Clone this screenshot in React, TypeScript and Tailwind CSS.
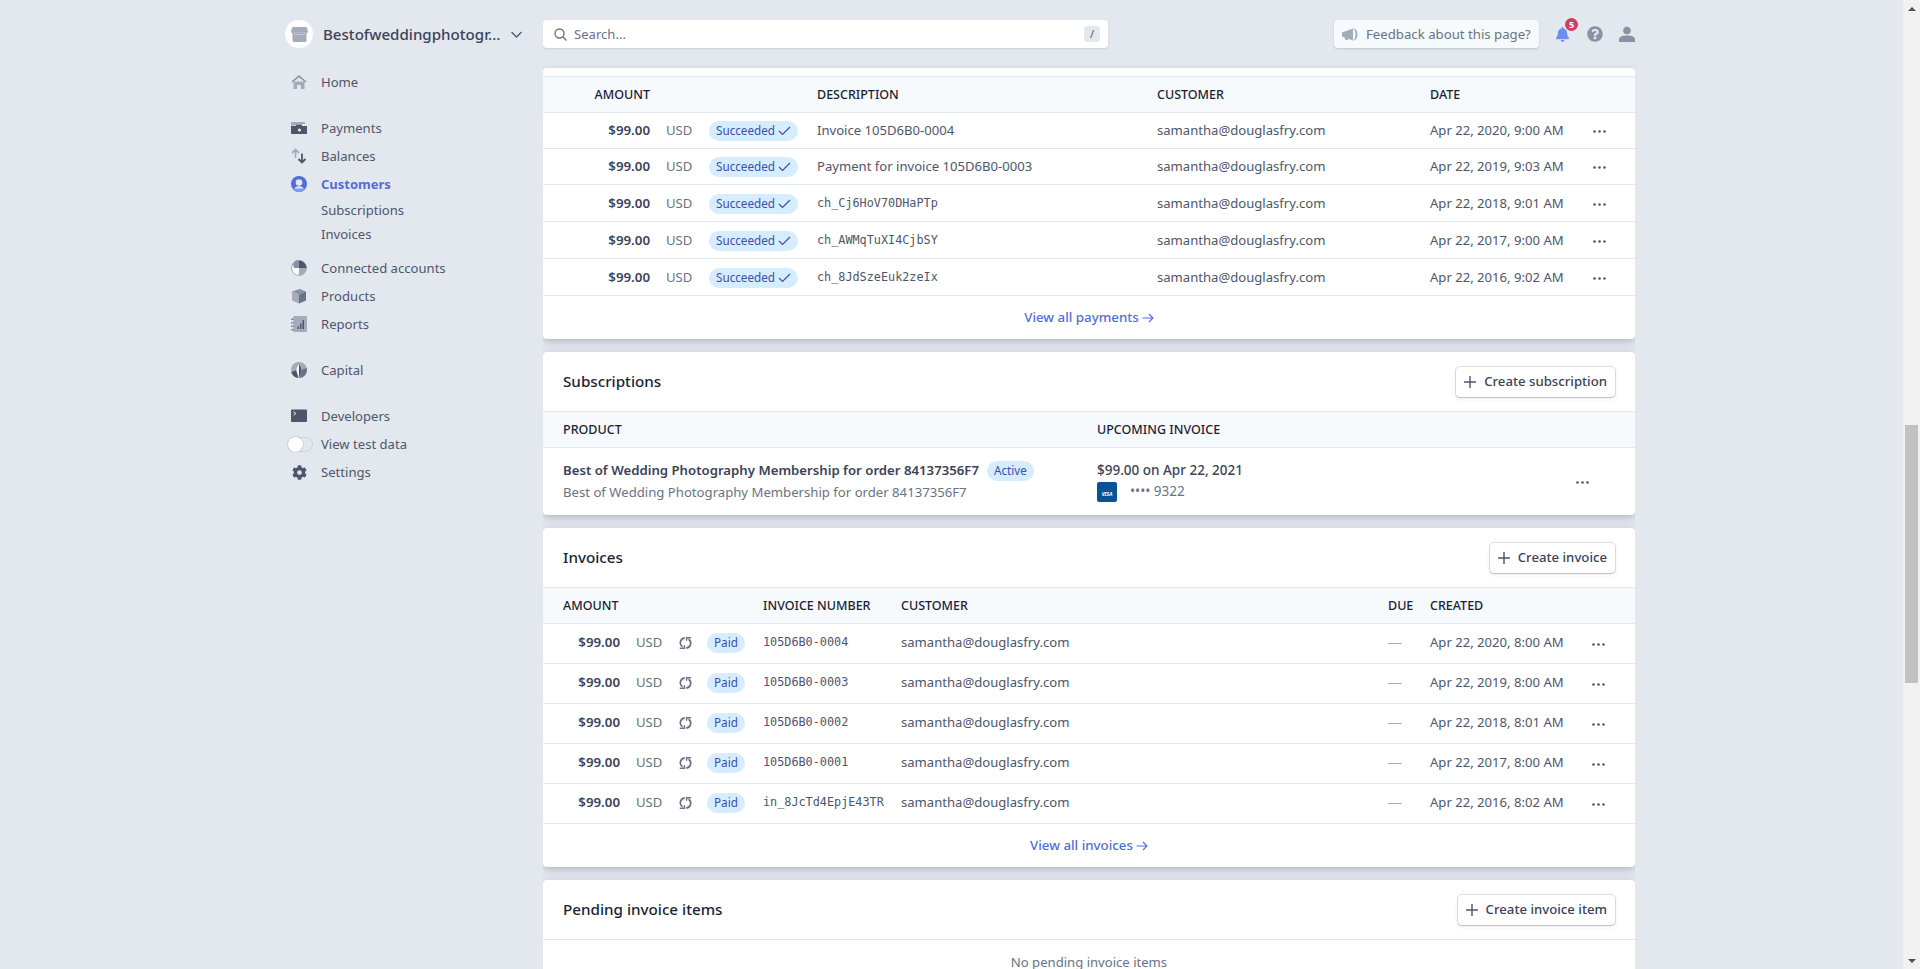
import React from "react";
import { FaBell, FaCog, FaQuestionCircle } from "react-icons/fa";

const payments = [
  ["Invoice 105D6B0-0004", false, "Apr 22, 2020, 9:00 AM", "h-9"],
  ["Payment for invoice 105D6B0-0003", false, "Apr 22, 2019, 9:03 AM", "h-9"],
  ["ch_Cj6HoV70DHaPTp", true, "Apr 22, 2018, 9:01 AM", "h-[37px]"],
  ["ch_AWMqTuXI4CjbSY", true, "Apr 22, 2017, 9:00 AM", "h-[37px]"],
  ["ch_8JdSzeEuk2zeIx", true, "Apr 22, 2016, 9:02 AM", "h-[37px]"],
] as const;

const invoices = [
  ["105D6B0-0004", "Apr 22, 2020, 8:00 AM"],
  ["105D6B0-0003", "Apr 22, 2019, 8:00 AM"],
  ["105D6B0-0002", "Apr 22, 2018, 8:01 AM"],
  ["105D6B0-0001", "Apr 22, 2017, 8:00 AM"],
  ["in_8JcTd4EpjE43TR", "Apr 22, 2016, 8:02 AM"],
];

const mono = "pt-px font-['DejaVu_Sans_Mono',monospace] text-[11.8px] text-[#4f566b]";
const payCols = "grid grid-cols-[107px_59px_108px_340px_273px_163px_1fr] items-center";
const invCols = "grid grid-cols-[77px_59px_28px_56px_138px_487px_42px_162px_1fr] items-center";
const cardShadow = "shadow-[0_2px_5px_rgba(60,66,87,0.18),0_6px_14px_rgba(60,66,87,0.1)]";

function Dots({ className }: { className?: string }) {
  return (
    <svg width="13" height="3" viewBox="0 0 13 3" className={`block ${className ?? ""}`} fill="#4f566b">
      <circle cx="1.5" cy="1.5" r="1.3" />
      <circle cx="6.5" cy="1.5" r="1.3" />
      <circle cx="11.5" cy="1.5" r="1.3" />
    </svg>
  );
}

function Pill({ children }: { children: React.ReactNode }) {
  return (
    <span className="inline-flex h-5 items-center justify-center rounded-full bg-[#d6ecff] px-[7px] text-[11.7px] text-[#3d4eac]">
      {children}
    </span>
  );
}

function Plus() {
  return (
    <svg width="12" height="12" viewBox="0 0 12 12" className="shrink-0">
      <path d="M6 0v12M0 6h12" stroke="#4f566b" strokeWidth="1.4" />
    </svg>
  );
}

function CreateButton({ label }: { label: string }) {
  return (
    <button className="flex h-[30px] items-center gap-[8px] rounded-[4px] bg-white px-[8px] text-[13.2px] font-medium text-[#3c4257] shadow-[0_0_0_1px_rgba(60,66,87,0.16),0_1px_1px_rgba(0,0,0,0.12),0_2px_5px_rgba(60,66,87,0.08)]">
      <Plus />
      {label}
    </button>
  );
}

function CardHead({ title, action }: { title: string; action: string }) {
  return (
    <div className="flex h-[60px] items-center justify-between border-b border-[#e3e8ee] px-5">
      <h2 className="text-[15.2px] font-medium text-[#1a1f36]">{title}</h2>
      <CreateButton label={action} />
    </div>
  );
}

function ViewAll({ label }: { label: string }) {
  return (
    <a className="flex items-center justify-center gap-[3px] text-[13.3px] font-medium text-[#556cd6]">
      {label}
      <svg width="12" height="10" viewBox="0 0 12 10" fill="none" stroke="#556cd6" strokeWidth="1.1">
        <path d="M0.5 5h10.5M7 1l4 4-4 4" />
      </svg>
    </a>
  );
}

function Check() {
  return (
    <svg width="13" height="10" viewBox="0 0 13 10" fill="none" stroke="#3d4eac" strokeWidth="1.2" className="ml-[3px]">
      <path d="M1 5l3.5 3.5L12 1" />
    </svg>
  );
}

function Recur() {
  return (
    <svg width="13" height="14" viewBox="0 0 13 14" fill="none" stroke="#697386" strokeWidth="1.7">
      <path d="M5.800 1.800A5 5 0 0 0 3.400 10.800" />
      <path d="M0.800 12.200H5.400V9.200" strokeWidth="1.500" />
      <path d="M7.200 12.200A5 5 0 0 0 9.600 3.200" />
      <path d="M12.200 1.800H7.600V4.800" strokeWidth="1.500" />
    </svg>
  );
}

function Megaphone() {
  return (
    <svg width="16" height="15" viewBox="0 0 16 15">
      <path d="M0 5.500 11 1.500V13.500L0 9.500z" fill="#a3acb9" />
      <path d="M2.500 9.500h3l.6 3.500H3.500z" fill="#a3acb9" />
      <path d="M11 1.500c2.800 0 4.500 2.500 4.500 6s-1.700 6-4.500 6c1.700-1 2.500-3.300 2.500-6s-.8-5-2.500-6z" fill="#a3acb9" />
    </svg>
  );
}

function NavIcon({ name }: { name: string }) {
  const g = "#a3acb9";
  const d = "#4f566b";
  const m = "#8792a2";
  switch (name) {
    case "home":
      return (
        <svg width="16" height="16" viewBox="0 0 16 16">
          <path d="M2.5 7.5h11V15h-3.600v-4H6.100v4H2.500z" fill={g} />
          <path d="M8 1 0.500 7.600 1.400 8.500 8 3.200 14.600 8.500 15.500 7.600z" fill={m} />
        </svg>
      );
    case "payments":
      return (
        <svg width="16" height="16" viewBox="0 0 16 16">
          <path d="M0 2.500A.5.5 0 0 1 .5 2H14v2H0z" fill={g} />
          <path d="M0 4h5v1.500H0z" fill={g} />
          <path d="M0 6h16v8H1a1 1 0 0 1-1-1z" fill={d} />
          <path d="M5 6V4.500h6V6z" fill={d} />
          <circle cx="8.500" cy="10" r="1.600" fill="#e3e8ee" />
        </svg>
      );
    case "balances":
      return (
        <svg width="16" height="16" viewBox="0 0 16 16" fill="none" strokeWidth="1.800">
          <path d="M4.500 10V1.500M1 5l3.500-3.500L8 5" stroke={g} />
          <path d="M11 5.500V14.500M7.500 11l3.500 3.500 3.500-3.500" stroke={d} />
        </svg>
      );
    case "customers":
      return (
        <svg width="16" height="16" viewBox="0 0 16 16">
          <circle cx="8" cy="8" r="8" fill="#556cd6" />
          <path d="M2 13.300A8 8 0 0 0 14 13.300C12.500 11.800 10.500 11 8 11S3.500 11.800 2 13.300z" fill="#7b9cf5" />
          <circle cx="8" cy="6.500" r="3.300" fill="#e3e8ee" />
          <path d="M3.500 12.500C4.500 10.800 6 10.200 8 10.200s3.500.6 4.500 2.300z" fill="#e3e8ee" />
        </svg>
      );
    case "connected":
      return (
        <svg width="16" height="16" viewBox="0 0 16 16">
          <circle cx="8" cy="8" r="7.500" fill="#f7fafc" stroke={g} />
          <path d="M8 8V.5a7.500 7.500 0 0 1 7.500 7.500z" fill={d} />
          <path d="M3.500 8a4.500 4.500 0 0 1 4.500-7.500V8z" fill={m} />
          <path d="M8 8h7.500A7.500 7.500 0 0 1 8 15.500z" fill={g} />
        </svg>
      );
    case "products":
      return (
        <svg width="16" height="16" viewBox="0 0 16 16">
          <path d="M1 3.500 9 1l6 2.500L8 6.500z" fill={m} />
          <path d="M1 3.500 8 6.500V15.500L1 12.500z" fill={g} />
          <path d="M8 6.500 15 3.500V12.500L8 15.500z" fill="#697386" />
        </svg>
      );
    case "reports":
      return (
        <svg width="16" height="16" viewBox="0 0 16 16">
          <path d="M2.500 0H15a1 1 0 0 1 1 1v14a1 1 0 0 1-1 1H2.500z" fill={g} />
          <path d="M0 2.500h3v1.400H0zM0 6h3v1.400H0zM0 9.500h3v1.400H0zM0 13h3v1.400H0z" fill={m} />
          <path d="M6.500 10.500h1.500V13H6.500zM9 7.500h1.500V13H9zM11.500 4h1.500v9h-1.500z" fill={d} />
        </svg>
      );
    case "capital":
      return (
        <svg width="16" height="16" viewBox="0 0 16 16">
          <circle cx="8" cy="8" r="8" fill={g} />
          <path d="M0.300 10A8 8 0 0 0 7 15.900L6 8z" fill={d} />
          <path d="M15.700 6A8 8 0 0 1 8.500 15.900L10 8z" fill="#697386" />
          <path d="M8 2C6.200 4.500 5.400 6.600 5.400 8.300 5.400 10.700 7 13 8 15c1-2 2.600-4.300 2.600-6.700C10.600 6.600 9.800 4.500 8 2z" fill="#f7fafc" />
          <path d="M8 2c1.800 2.500 2.600 4.600 2.600 6.300C10.600 10.700 9 13 8 15z" fill={d} />
        </svg>
      );
    case "developers":
      return (
        <svg width="16" height="16" viewBox="0 0 16 16">
          <rect y="1.500" width="16" height="12.500" rx="1" fill={d} />
          <path d="M2.500 4 5 5.500 2.500 7" fill="none" stroke="#e3e8ee" strokeWidth="1" />
        </svg>
      );
    case "settings":
      return <FaCog size={15} color="#4f566b" />;
    default:
      return null;
  }
}

function NavItem({ icon, label, active, className }: { icon: string; label: string; active?: boolean; className?: string }) {
  return (
    <div className={`flex h-7 items-center gap-[14px] pl-[6px] ${className ?? ""}`}>
      <span className="flex h-4 w-4 items-center justify-center">
        <NavIcon name={icon} />
      </span>
      <span className={active ? "pt-px text-[13px] font-bold text-[#556cd6]" : "pt-px text-[13.1px] text-[#4f566b]"}>{label}</span>
    </div>
  );
}

function Sidebar() {
  return (
    <aside className="w-[258px] shrink-0">
      <div className="mt-5 flex h-7 items-center">
        <span className="flex h-7 w-7 items-center justify-center rounded-full bg-white">
          <svg width="17" height="15" viewBox="0 0 17 15">
            <path d="M1.500 6h14v7.500a1.500 1.500 0 0 1-1.500 1.500H3a1.500 1.500 0 0 1-1.500-1.500z" fill="#a3acb9" />
            <path d="M2 0h13a1 1 0 0 1 1 1l1 3.500a2 2 0 0 1-3.700.8 2.200 2.200 0 0 1-3.200 0 2.200 2.200 0 0 1-3.200 0 2.200 2.200 0 0 1-3.200 0A2 2 0 0 1 0 4.500L1 1a1 1 0 0 1 1-1z" fill="#a3acb9" />
            <path d="M3 7.500h11V8H3z" fill="#e3e8ee" />
          </svg>
        </span>
        <span className="ml-[10px] text-[15.100px] font-medium text-[#3c4257]">Bestofweddingphotogr...</span>
        <svg width="11" height="7" viewBox="0 0 11 7" fill="none" stroke="#4f566b" strokeWidth="1.300" className="ml-[11px]">
          <path d="M.5 1l5 5 5-5" />
        </svg>
      </div>
      <nav className="mt-5">
        <NavItem icon="home" label="Home" />
        <NavItem icon="payments" label="Payments" className="mt-[18px]" />
        <NavItem icon="balances" label="Balances" />
        <NavItem icon="customers" label="Customers" active />
        <div className="flex h-6 items-center pl-9 pt-px text-[13.1px] text-[#4f566b]">Subscriptions</div>
        <div className="flex h-6 items-center pl-9 pt-px text-[13.1px] text-[#4f566b]">Invoices</div>
        <NavItem icon="connected" label="Connected accounts" className="mt-2" />
        <NavItem icon="products" label="Products" />
        <NavItem icon="reports" label="Reports" />
        <NavItem icon="capital" label="Capital" className="mt-[18px]" />
        <NavItem icon="developers" label="Developers" className="mt-[18px]" />
        <div className="flex h-7 items-center gap-[8px] pl-[3px]">
          <span className="flex h-[15px] w-[25px] items-center rounded-full bg-[#e3e8ee] shadow-[inset_0_0_0_1px_rgba(60,66,87,0.12)]">
            <span className="h-[15px] w-[15px] rounded-full bg-white shadow-[0_0_0_1px_rgba(60,66,87,0.12)]" />
          </span>
          <span className="pt-px text-[13.1px] text-[#4f566b]">View test data</span>
        </div>
        <NavItem icon="settings" label="Settings" />
      </nav>
    </aside>
  );
}

function TopBar() {
  return (
    <header className="flex h-[68px] shrink-0 items-center">
      <div className="flex h-7 w-[565px] items-center rounded-[4px] bg-white pl-[11px] pr-2 shadow-[0_1px_2px_rgba(60,66,87,0.16)]">
        <svg width="13" height="13" viewBox="0 0 13 13" fill="none" stroke="#697386" strokeWidth="1.400">
          <circle cx="5.500" cy="5.500" r="4.500" />
          <path d="M9 9l3.500 3.500" />
        </svg>
        <span className="ml-[7px] flex-1 pt-px text-[13.1px] text-[#697386]">Search...</span>
        <span className="flex h-4 w-4 items-center justify-center rounded-[3px] bg-[#e3e8ee] text-[11px] text-[#4f566b]">/</span>
      </div>
      <div className="ml-auto flex h-7 w-[205px] items-center gap-[8px] rounded-[4px] bg-[#f7fafc] pl-2 shadow-[0_1px_2px_rgba(60,66,87,0.2)]">
        <Megaphone />
        <span className="pt-px text-[13.2px] text-[#697386]">Feedback about this page?</span>
      </div>
      <div className="relative ml-[17px] flex h-4 w-[13px] items-center justify-center">
        <FaBell size={15} color="#6c8eef" />
        <span className="absolute left-[9px] top-[-8px] flex h-[13px] w-[13px] items-center justify-center rounded-full bg-[#cd3d64] text-[9px] font-bold text-white">5</span>
      </div>
      <span className="ml-[18px] flex"><FaQuestionCircle size={16} color="#8792a2" /></span>
      <svg width="16" height="16" viewBox="0 0 16 16" className="ml-4" fill="#8792a2">
        <circle cx="8" cy="4.500" r="3.800" />
        <path d="M0 16v-2.500C0 11 3 9.500 8 9.500s8 1.500 8 4V16z" />
      </svg>
    </header>
  );
}

function PaymentsCard() {
  return (
    <section className={`overflow-hidden rounded-[4px] bg-white pt-2 ${cardShadow}`}>
      <div className={`${payCols} h-[37px] border-y border-[#e3e8ee] bg-[#f7fafc] pt-[2px] text-[12.5px] font-medium text-[#1a1f36]`}>
        <span className="text-right">AMOUNT</span>
        <span />
        <span />
        <span>DESCRIPTION</span>
        <span>CUSTOMER</span>
        <span>DATE</span>
        <span />
      </div>
      {payments.map(([desc, isId, date, h]) => (
        <div key={date} className={`${payCols} ${h} border-b border-[#e3e8ee] pt-px text-[13.1px] text-[#4f566b]`}>
          <span className="text-right text-[13.3px] font-semibold text-[#3c4257]">$99.00</span>
          <span className="pl-4 text-[#697386]">USD</span>
          <span className="flex">
            <Pill>
              Succeeded
              <Check />
            </Pill>
          </span>
          <span className={isId ? mono : ""}>{desc}</span>
          <span>samantha@douglasfry.com</span>
          <span>{date}</span>
          <Dots className="mt-px" />
        </div>
      ))}
      <div className="flex h-[43px] items-center justify-center">
        <ViewAll label="View all payments" />
      </div>
    </section>
  );
}

function SubscriptionsCard() {
  return (
    <section className={`overflow-hidden rounded-[4px] bg-white ${cardShadow}`}>
      <CardHead title="Subscriptions" action="Create subscription" />
      <div className="grid h-9 grid-cols-[534px_1fr] items-center border-b border-[#e3e8ee] bg-[#f7fafc] pl-5 pt-[2px] text-[12.5px] font-medium text-[#1a1f36]">
        <span>PRODUCT</span>
        <span>UPCOMING INVOICE</span>
      </div>
      <div className="grid h-[67px] grid-cols-[534px_479px_1fr] items-center pl-5">
        <div>
          <div className="flex h-5 items-center gap-[8px]">
            <span className="text-[13.2px] font-semibold text-[#3c4257]">Best of Wedding Photography Membership for order 84137356F7</span>
            <Pill>Active</Pill>
          </div>
          <div className="mt-[1px] text-[13.15px] leading-5 text-[#697386]">Best of Wedding Photography Membership for order 84137356F7</div>
        </div>
        <div>
          <div className="-mt-[2px] text-[13.5px] font-medium leading-5 text-[#3c4257]">$99.00 on Apr 22, 2021</div>
          <div className="mt-[2px] flex h-5 items-center">
            <span className="flex h-5 w-5 items-end justify-center rounded-[2px] bg-[#0a5296] pb-[5px] text-[5px] font-bold italic leading-none text-white">VISA</span>
            <span className="ml-[13px] text-[13.5px] text-[#697386]">•••• 9322</span>
          </div>
        </div>
        <Dots className="mt-[2px]" />
      </div>
    </section>
  );
}

function InvoicesCard() {
  return (
    <section className={`overflow-hidden rounded-[4px] bg-white ${cardShadow}`}>
      <CardHead title="Invoices" action="Create invoice" />
      <div className={`${invCols} h-9 border-b border-[#e3e8ee] bg-[#f7fafc] pt-[2px] text-[12.5px] font-medium text-[#1a1f36]`}>
        <span className="pl-5">AMOUNT</span>
        <span />
        <span />
        <span />
        <span>INVOICE NUMBER</span>
        <span>CUSTOMER</span>
        <span>DUE</span>
        <span>CREATED</span>
        <span />
      </div>
      {invoices.map(([num, date]) => (
        <div key={date} className={`${invCols} h-10 border-b border-[#e3e8ee] pb-[2px] text-[13.1px] text-[#4f566b]`}>
          <span className="text-right text-[13.3px] font-semibold text-[#3c4257]">$99.00</span>
          <span className="pl-4 text-[#697386]">USD</span>
          <span className="flex"><Recur /></span>
          <span className="flex">
            <Pill>Paid</Pill>
          </span>
          <span className={mono}>{num}</span>
          <span>samantha@douglasfry.com</span>
          <span className="mt-[2px] h-px w-[14px] bg-[#a3acb9]" />
          <span>{date}</span>
          <Dots className="mt-[3px]" />
        </div>
      ))}
      <div className="flex h-[43px] items-center justify-center">
        <ViewAll label="View all invoices" />
      </div>
    </section>
  );
}

function PendingCard() {
  return (
    <section className={`rounded-[4px] bg-white ${cardShadow}`}>
      <CardHead title="Pending invoice items" action="Create invoice item" />
      <div className="pb-8 pt-[12px] text-center text-[13.1px] leading-5 text-[#697386]">No pending invoice items</div>
    </section>
  );
}

function Scrollbar() {
  return (
    <div className="flex h-full w-[17px] shrink-0 flex-col items-center bg-[#f1f1f1]">
      <div className="flex h-[17px] items-center justify-center">
        <span className="h-0 w-0 border-x-[4px] border-b-[4px] border-x-transparent border-b-[#505050]" />
      </div>
      <div className="h-[408px]" />
      <div className="h-[258px] w-[13px] bg-[#c1c1c1]" />
      <div className="flex-1" />
      <div className="flex h-[17px] items-center justify-center">
        <span className="h-0 w-0 border-x-[4px] border-t-[4px] border-x-transparent border-t-[#505050]" />
      </div>
    </div>
  );
}

export default function App() {
  return (
    <div className="flex h-[969px] overflow-hidden bg-[#e3e8ee] font-['Noto_Sans',sans-serif]">
      <div className="flex min-w-0 flex-1 pl-[285px]">
        <Sidebar />
        <main className="flex h-[969px] w-[1092px] shrink-0 flex-col overflow-hidden">
          <TopBar />
          <div className="flex flex-col gap-[13px]">
            <PaymentsCard />
            <SubscriptionsCard />
            <InvoicesCard />
            <PendingCard />
          </div>
        </main>
      </div>
      <Scrollbar />
    </div>
  );
}
